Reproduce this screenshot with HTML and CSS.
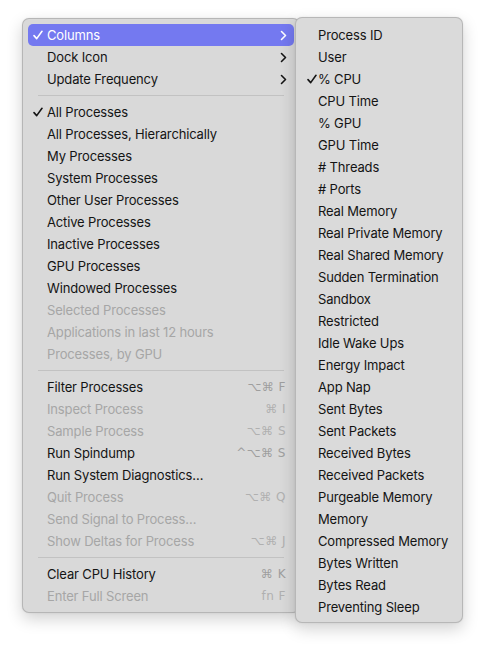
FILE: index.html
```html
<!DOCTYPE html>
<html>
<head>
<meta charset="utf-8">
<link rel="stylesheet" href="styles.css">
</head>
<body>
<div class="stage">
  <div class="menu main">
    <div class="item active"><span class="check"><svg width="10" height="10" viewBox="0 0 10 10"><path d="M1 5.6 L3.7 8.6 L9 1.3" fill="none" stroke="currentColor" stroke-width="1.6" stroke-linecap="round" stroke-linejoin="round"/></svg></span><span class="label">Columns</span><span class="chev"><svg width="7" height="11" viewBox="0 0 7 11"><path d="M1.5 1.5 L5.5 5.5 L1.5 9.5" fill="none" stroke="currentColor" stroke-width="1.6" stroke-linecap="round" stroke-linejoin="round"/></svg></span></div>
    <div class="item"><span class="check"></span><span class="label">Dock Icon</span><span class="chev"><svg width="7" height="11" viewBox="0 0 7 11"><path d="M1.5 1.5 L5.5 5.5 L1.5 9.5" fill="none" stroke="currentColor" stroke-width="1.6" stroke-linecap="round" stroke-linejoin="round"/></svg></span></div>
    <div class="item"><span class="check"></span><span class="label">Update Frequency</span><span class="chev"><svg width="7" height="11" viewBox="0 0 7 11"><path d="M1.5 1.5 L5.5 5.5 L1.5 9.5" fill="none" stroke="currentColor" stroke-width="1.6" stroke-linecap="round" stroke-linejoin="round"/></svg></span></div>
    <div class="sep"></div>
    <div class="item"><span class="check"><svg width="10" height="10" viewBox="0 0 10 10"><path d="M1 5.6 L3.7 8.6 L9 1.3" fill="none" stroke="currentColor" stroke-width="1.6" stroke-linecap="round" stroke-linejoin="round"/></svg></span><span class="label">All Processes</span></div>
    <div class="item"><span class="check"></span><span class="label">All Processes, Hierarchically</span></div>
    <div class="item"><span class="check"></span><span class="label">My Processes</span></div>
    <div class="item"><span class="check"></span><span class="label">System Processes</span></div>
    <div class="item"><span class="check"></span><span class="label">Other User Processes</span></div>
    <div class="item"><span class="check"></span><span class="label">Active Processes</span></div>
    <div class="item"><span class="check"></span><span class="label">Inactive Processes</span></div>
    <div class="item"><span class="check"></span><span class="label">GPU Processes</span></div>
    <div class="item"><span class="check"></span><span class="label">Windowed Processes</span></div>
    <div class="item disabled"><span class="check"></span><span class="label">Selected Processes</span></div>
    <div class="item disabled"><span class="check"></span><span class="label">Applications in last 12 hours</span></div>
    <div class="item disabled"><span class="check"></span><span class="label">Processes, by GPU</span></div>
    <div class="sep"></div>
    <div class="item"><span class="check"></span><span class="label">Filter Processes</span><span class="key">⌥⌘ F</span></div>
    <div class="item disabled"><span class="check"></span><span class="label">Inspect Process</span><span class="key">⌘ I</span></div>
    <div class="item disabled"><span class="check"></span><span class="label">Sample Process</span><span class="key">⌥⌘ S</span></div>
    <div class="item"><span class="check"></span><span class="label">Run Spindump</span><span class="key">^⌥⌘ S</span></div>
    <div class="item"><span class="check"></span><span class="label">Run System Diagnostics…</span></div>
    <div class="item disabled"><span class="check"></span><span class="label">Quit Process</span><span class="key">⌥⌘ Q</span></div>
    <div class="item disabled"><span class="check"></span><span class="label">Send Signal to Process…</span></div>
    <div class="item disabled"><span class="check"></span><span class="label">Show Deltas for Process</span><span class="key">⌥⌘ J</span></div>
    <div class="sep"></div>
    <div class="item"><span class="check"></span><span class="label">Clear CPU History</span><span class="key">⌘ K</span></div>
    <div class="item disabled"><span class="check"></span><span class="label">Enter Full Screen</span><span class="key">fn F</span></div>
  </div>
  <div class="menu sub">
    <div class="item"><span class="check"></span><span class="label">Process ID</span></div>
    <div class="item"><span class="check"></span><span class="label">User</span></div>
    <div class="item"><span class="check"><svg width="10" height="10" viewBox="0 0 10 10"><path d="M1 5.6 L3.7 8.6 L9 1.3" fill="none" stroke="currentColor" stroke-width="1.6" stroke-linecap="round" stroke-linejoin="round"/></svg></span><span class="label">% CPU</span></div>
    <div class="item"><span class="check"></span><span class="label">CPU Time</span></div>
    <div class="item"><span class="check"></span><span class="label">% GPU</span></div>
    <div class="item"><span class="check"></span><span class="label">GPU Time</span></div>
    <div class="item"><span class="check"></span><span class="label"># Threads</span></div>
    <div class="item"><span class="check"></span><span class="label"># Ports</span></div>
    <div class="item"><span class="check"></span><span class="label">Real Memory</span></div>
    <div class="item"><span class="check"></span><span class="label">Real Private Memory</span></div>
    <div class="item"><span class="check"></span><span class="label">Real Shared Memory</span></div>
    <div class="item"><span class="check"></span><span class="label">Sudden Termination</span></div>
    <div class="item"><span class="check"></span><span class="label">Sandbox</span></div>
    <div class="item"><span class="check"></span><span class="label">Restricted</span></div>
    <div class="item"><span class="check"></span><span class="label">Idle Wake Ups</span></div>
    <div class="item"><span class="check"></span><span class="label">Energy Impact</span></div>
    <div class="item"><span class="check"></span><span class="label">App Nap</span></div>
    <div class="item"><span class="check"></span><span class="label">Sent Bytes</span></div>
    <div class="item"><span class="check"></span><span class="label">Sent Packets</span></div>
    <div class="item"><span class="check"></span><span class="label">Received Bytes</span></div>
    <div class="item"><span class="check"></span><span class="label">Received Packets</span></div>
    <div class="item"><span class="check"></span><span class="label">Purgeable Memory</span></div>
    <div class="item"><span class="check"></span><span class="label">Memory</span></div>
    <div class="item"><span class="check"></span><span class="label">Compressed Memory</span></div>
    <div class="item"><span class="check"></span><span class="label">Bytes Written</span></div>
    <div class="item"><span class="check"></span><span class="label">Bytes Read</span></div>
    <div class="item"><span class="check"></span><span class="label">Preventing Sleep</span></div>
  </div>
</div>
</body>
</html>
```
FILE: styles.css
```css
html, body {
  margin: 0;
  padding: 0;
  background: #ffffff;
}
body {
  font-family: Inter, "Liberation Sans", "DejaVu Sans", sans-serif;
  font-size: 13px;
  color: #141414;
}
.stage {
  position: relative;
  padding: 18px 0 0 22px;
  width: 485px;
  height: 650px;
  box-sizing: border-box;
}
.menu {
  background: #d9d9d9;
  border-radius: 7px;
  border: 1px solid rgba(0,0,0,0.16);
  box-shadow: 0 6px 16px rgba(0,0,0,0.18), 0 0 2px rgba(0,0,0,0.08);
  box-sizing: border-box;
}
.main {
  width: 278px;
  padding: 5px;
}
.sub {
  position: absolute;
  left: 295px;
  top: 17px;
  width: 168px;
  padding: 6px 2px 4px 5px;
  background: #dadada;
}
.item {
  display: flex;
  align-items: center;
  height: 22px;
  border-radius: 5px;
  padding: 0 6px 0 4px;
  white-space: nowrap;
  letter-spacing: -0.15px;
}
.sub .item {
  padding: 0 2px 0 5px;
}
.item.active {
  background: #7479f0;
  color: #ffffff;
}
.item.disabled {
  color: #a6a6a6;
}
.check {
  flex: 0 0 10px;
  width: 10px;
  display: flex;
  align-items: center;
  margin-left: 1px;
  margin-right: 4px;
}
.sub .check {
  margin-right: 1px;
}
.label {
  flex: 1;
}
.chev {
  display: flex;
  align-items: center;
  margin-right: 1px;
}
.key {
  color: #9e9e9e;
  letter-spacing: 0.5px;
  font-family: "DejaVu Sans", sans-serif;
  font-size: 12px;
  margin-right: 2px;
}
.item.disabled .key {
  color: #b0b0b0;
}
.sep {
  height: 1px;
  background: #c2c2c2;
  margin: 5px 10px 5px 10px;
}
```
